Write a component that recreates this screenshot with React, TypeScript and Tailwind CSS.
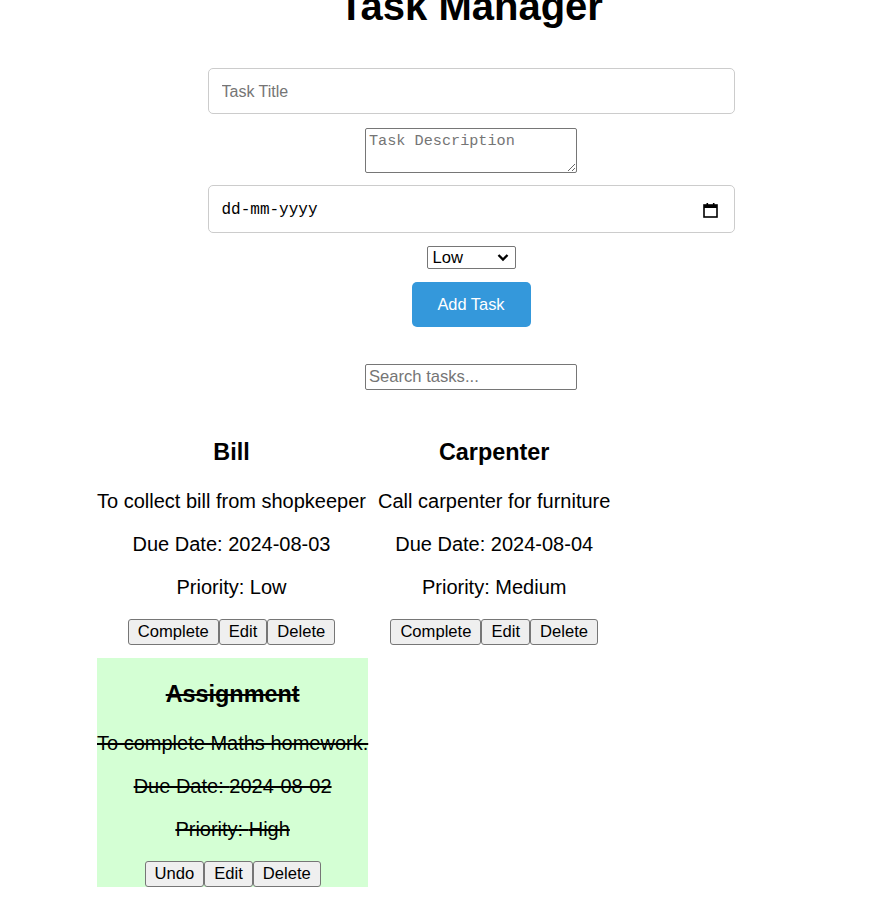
import React from "react";

type Task = { title: string; desc: string; due: string; priority: string; done: boolean };

const tasks: Task[] = [
  { title: "Bill", desc: "To collect bill from shopkeeper", due: "2024-08-03", priority: "Low", done: false },
  { title: "Carpenter", desc: "Call carpenter for furniture", due: "2024-08-04", priority: "Medium", done: false },
  { title: "Assignment", desc: "To complete Maths homework.", due: "2024-08-02", priority: "High", done: true },
];

function Btn({ children }: { children: React.ReactNode }) {
  return (
    <button className="h-[26px] px-[9px] pt-[2px] bg-[#efefef] border border-[#767676] rounded-[3px] text-[16.6px] leading-none text-black font-['Liberation_Sans',Arial,sans-serif]">
      {children}
    </button>
  );
}

function Card({ t }: { t: Task }) {
  const strike = t.done ? "line-through" : "";
  return (
    <div className={`${t.done ? "bg-[#d4ffd4]" : ""} text-center text-[20px] text-black`}>
      <h3 className={`mt-[23.4px] mb-[23.4px] text-[23.4px] leading-[27px] font-bold ${strike}`}>{t.title}</h3>
      <p className={`my-[20px] leading-[23px] whitespace-nowrap ${strike}`}>{t.desc}</p>
      <p className={`my-[20px] leading-[23px] whitespace-nowrap ${strike}`}>Due Date: {t.due}</p>
      <p className={`my-[20px] leading-[23px] whitespace-nowrap ${strike}`}>Priority: {t.priority}</p>
      <div className="flex justify-center">
        <Btn>{t.done ? "Undo" : "Complete"}</Btn>
        <Btn>Edit</Btn>
        <Btn>Delete</Btn>
      </div>
    </div>
  );
}

export default function App() {
  return (
    <div className="min-h-screen bg-white overflow-hidden font-['Liberation_Sans',Arial,sans-serif] text-black">
      <div className="ml-[96px] w-[750px] flex flex-col items-center">
        <h1 className="mt-[-17px] text-[40px] leading-[46px] font-bold text-center">Task Manager</h1>

        <input
          placeholder="Task Title"
          className="mt-[39px] w-[527px] h-[46px] pt-[1px] border border-[#cccccc] rounded-[5px] px-[13px] text-[16px] placeholder:text-[#757575] outline-none"
        />

        <textarea
          placeholder="Task Description"
          className="mt-[14px] w-[212px] h-[45px] border border-[#767676] rounded-[2px] px-[3px] pt-[3px] text-[15.2px] leading-[18px] font-['Liberation_Mono',monospace] placeholder:text-[#757575] outline-none"
        />

        <div className="mt-[12px] w-[527px] h-[48px] border border-[#cccccc] rounded-[5px] pl-[13px] pr-[16px] flex items-center justify-between">
          <span className="text-[16px] pt-[1px] font-['Liberation_Mono',monospace] text-black">dd-mm-yyyy</span>
          <svg width="15" height="16" viewBox="0 0 15 16" className="mt-[1px]">
            <rect x="1" y="3" width="13" height="12" fill="none" stroke="#000" strokeWidth="1.6" />
            <rect x="1" y="3" width="13" height="3" fill="#000" />
            <rect x="3.5" y="1" width="1.6" height="3" fill="#000" />
            <rect x="9.9" y="1" width="1.6" height="3" fill="#000" />
          </svg>
        </div>

        <div className="mt-[13px] w-[89px] h-[23px] border border-[#767676] rounded-[2px] pl-[5px] pr-[6px] flex items-center justify-between">
          <span className="text-[16.6px] leading-none pt-[1px]">Low</span>
          <svg width="12" height="9" viewBox="0 0 12 9">
            <path d="M1.5 2 L6 6.5 L10.5 2" fill="none" stroke="#000" strokeWidth="2.4" />
          </svg>
        </div>

        <button className="mt-[13px] w-[119px] h-[45px] bg-[#3498db] rounded-[5px] text-white text-[16.4px]">
          Add Task
        </button>

        <input
          placeholder="Search tasks..."
          className="mt-[37px] w-[212px] h-[26px] border border-[#767676] rounded-[2px] px-[3px] text-[16.6px] placeholder:text-[#757575] outline-none"
        />

        <div className="mt-[26px] ml-[1px] self-start flex flex-wrap gap-x-[12px] gap-y-[13px] w-[700px] items-start">
          {tasks.map((t) => (
            <Card key={t.title} t={t} />
          ))}
        </div>
      </div>
    </div>
  );
}
